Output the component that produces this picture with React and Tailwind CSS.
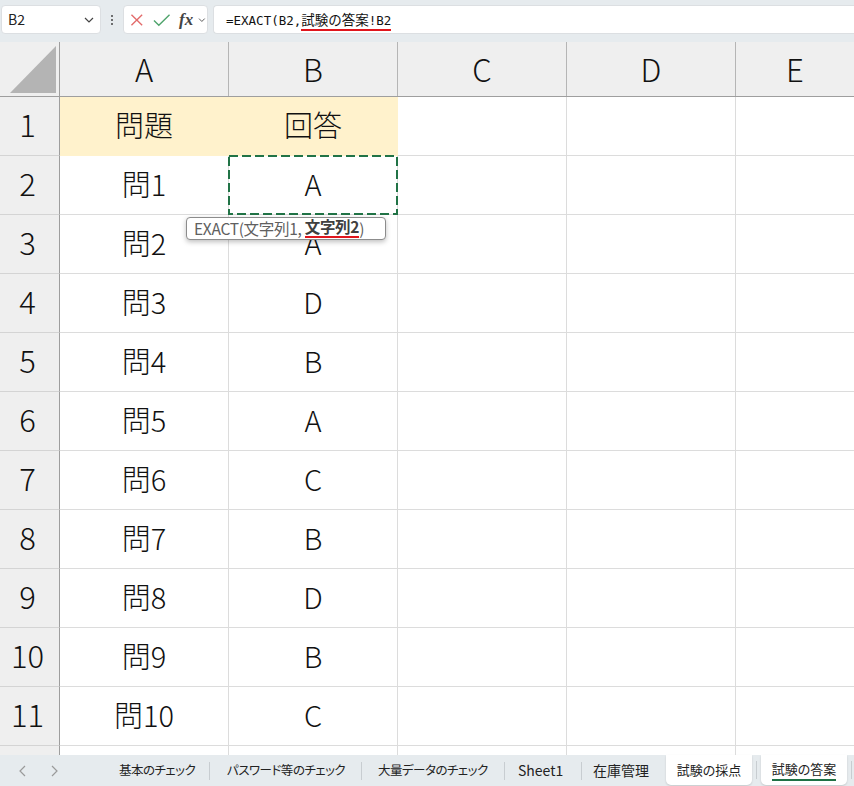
import React from "react";

const F = { fontFamily: '"Noto Sans CJK JP", "Noto Sans", sans-serif' };

const rows = [
  ["問題", "回答"],
  ["問1", "A"],
  ["問2", "A"],
  ["問3", "D"],
  ["問4", "B"],
  ["問5", "A"],
  ["問6", "C"],
  ["問7", "B"],
  ["問8", "D"],
  ["問9", "B"],
  ["問10", "C"],
];

function Chevron({ className }) {
  return (
    <svg className={className} width="10" height="6" viewBox="0 0 10 6" fill="none">
      <path d="M1 1l4 4 4-4" stroke="#444" strokeWidth="1.2" />
    </svg>
  );
}

function Sep() {
  return <span className="w-px h-[18px] bg-[#c8cdd1] shrink-0"></span>;
}

export default function App() {
  return (
    <div className="w-[854px] h-[786px] overflow-hidden flex flex-col bg-white text-[#1a1a1a]" style={F}>
      {/* Formula bar */}
      <div className="h-[42px] bg-[#e6ebee] flex items-start pt-[5px] pl-[1px] gap-0 shrink-0">
        <div className="w-[100px] h-[29px] bg-white rounded-[4px] border border-[#dcdfe2] flex items-center pl-[6px] pr-[6px] justify-between">
          <span className="text-[14px] text-[#222]">B2</span>
          <Chevron />
        </div>
        <div className="w-[22px] h-[29px] flex flex-col items-center justify-center gap-[2px]">
          <span className="w-[2px] h-[2px] bg-[#444] rounded-full"></span>
          <span className="w-[2px] h-[2px] bg-[#444] rounded-full"></span>
          <span className="w-[2px] h-[2px] bg-[#444] rounded-full"></span>
        </div>
        <div className="w-[85px] h-[29px] bg-white rounded-[4px] border border-[#dcdfe2] flex items-center pl-[5px]">
          <svg width="14" height="14" viewBox="0 0 14 14" className="ml-[1px]">
            <path d="M1.5 1.5l11 11M12.5 1.5l-11 11" stroke="#e36b6b" strokeWidth="1.4" />
          </svg>
          <svg width="18" height="14" viewBox="0 0 18 14" className="ml-[9px]">
            <path d="M1 7.5l5 5L17 1.5" stroke="#4ea36b" strokeWidth="1.4" fill="none" />
          </svg>
          <span className="ml-[9px] text-[17px] italic font-semibold text-[#444] leading-none" style={{ fontFamily: '"Liberation Serif", "DejaVu Serif", serif' }}>fx</span>
          <Chevron className="ml-[4px] scale-75" />
        </div>
        <div className="ml-[5px] flex-1 h-[29px] bg-white rounded-l-[4px] border border-r-0 border-[#dcdfe2] flex items-center pl-[12px]">
          <span className="text-[12.5px] text-[#111] whitespace-nowrap" style={{ fontFamily: '"DejaVu Sans Mono", "Noto Sans CJK JP", monospace' }}>
            =EXACT(B2,<span className="border-b-2 border-[#e0151c] pb-[1px]"><span className="text-[13.5px]" style={F}>試験の答案</span>!B2</span>
          </span>
        </div>
      </div>

      {/* Grid */}
      <div className="relative flex-1 flex flex-col overflow-hidden font-light">
        {/* Column headers */}
        <div className="flex h-[55px] bg-[#efefef] border-b border-[#9e9e9e] shrink-0">
          <div className="w-[60px] border-r border-[#9e9e9e] relative shrink-0">
            <svg className="absolute left-[10px] top-[4px]" width="46" height="47" viewBox="0 0 46 47">
              <polygon points="46,0 46,47 0,47" fill="#b4b4b4" />
            </svg>
          </div>
          {["A", "B", "C", "D", "E"].map((c, i) => (
            <div
              key={c}
              className={`${i < 4 ? "w-[169px] border-r border-[#b5b5b5]" : "flex-1"} shrink-0 flex items-center justify-center text-[31px] text-[#111]`}
            >
              {c}
            </div>
          ))}
        </div>

        {rows.map((r, i) => {
          const yellow = i === 0;
          return (
            <div key={i} className="flex h-[59px] shrink-0">
              <div className="w-[60px] shrink-0 bg-[#efefef] border-r border-[#9e9e9e] border-b border-b-[#d4d4d4] flex items-center justify-center text-[31px] pb-[3px] pr-[4px] text-[#111]">
                {i + 1}
              </div>
              <div className={`w-[169px] shrink-0 flex items-center justify-center text-[29px] pb-[3px] border-r border-b text-[#111] ${yellow ? "bg-[#fff2cc] border-[#fff2cc]" : "border-[#dcdcdc]"}`}>
                {r[0]}
              </div>
              <div className={`w-[169px] shrink-0 flex items-center justify-center text-[29px] pb-[3px] border-r border-b text-[#111] ${yellow ? "bg-[#fff2cc] border-[#fff2cc]" : "border-[#dcdcdc]"}`}>
                {r[1]}
              </div>
              <div className="w-[169px] shrink-0 border-r border-b border-[#dcdcdc]"></div>
              <div className="w-[169px] shrink-0 border-r border-b border-[#dcdcdc]"></div>
              <div className="flex-1 border-b border-[#dcdcdc]"></div>
            </div>
          );
        })}
        <div className="flex flex-1">
          <div className="w-[60px] shrink-0 bg-[#efefef] border-r border-[#9e9e9e]"></div>
          <div className="w-[169px] shrink-0 border-r border-[#dcdcdc]"></div>
          <div className="w-[169px] shrink-0 border-r border-[#dcdcdc]"></div>
          <div className="w-[169px] shrink-0 border-r border-[#dcdcdc]"></div>
          <div className="w-[169px] shrink-0 border-r border-[#dcdcdc]"></div>
          <div className="flex-1"></div>
        </div>

        {/* Selection (copy) marquee on B2 */}
        <svg className="absolute left-[228px] top-[113px]" width="170" height="60" viewBox="0 0 170 60">
          <rect x="1" y="1" width="168" height="58" fill="none" stroke="#217346" strokeWidth="2" strokeDasharray="9 4" />
        </svg>

        {/* Function tooltip */}
        <div className="absolute left-[186px] top-[175px] h-[23px] w-[200px] pl-[7px] bg-white border border-[#8c8c8c] rounded-[4px] shadow-[0_2px_5px_rgba(0,0,0,0.25)] flex items-center text-[15.5px] font-normal text-[#606060] whitespace-nowrap leading-none tracking-[-0.3px]">
          EXACT(文字列1,&nbsp;
          <span className="font-bold text-[#404040] border-b-2 border-[#e0151c] pb-[1px]">文字列2</span>)
        </div>
      </div>

      {/* Sheet tabs */}
      <div className="h-[31px] bg-[#e6ebee] flex items-stretch text-[13px] text-[#222] shrink-0 whitespace-nowrap [font-feature-settings:'palt']">
        <div className="w-[110px] shrink-0 flex items-center pl-[18px] gap-[21px]">
          <svg width="10" height="12" viewBox="0 0 10 12"><path d="M7 1L2 6l5 5" stroke="#9a9a9a" strokeWidth="1.2" fill="none" /></svg>
          <svg width="10" height="12" viewBox="0 0 10 12"><path d="M3 1l5 5-5 5" stroke="#9a9a9a" strokeWidth="1.2" fill="none" /></svg>
        </div>
        <div className="flex items-center shrink-0">
          <span className="w-[99px] pl-[9px] shrink-0 text-[12.5px] tracking-[-0.5px]">基本のチェック</span>
          <Sep />
          <span className="w-[151px] pl-[17px] shrink-0 text-[12.5px] tracking-[-0.5px]">パスワード等のチェック</span>
          <Sep />
          <span className="w-[142px] pl-[16px] shrink-0 text-[12.5px] tracking-[-0.5px]">大量データのチェック</span>
          <Sep />
          <span className="w-[76px] pl-[13px] shrink-0 text-[14px]">Sheet1</span>
          <Sep />
          <span className="w-[84px] pl-[11px] shrink-0 text-[14px]">在庫管理</span>
        </div>
        <div className="flex items-start shrink-0">
          <div className="h-[30px] w-[86px] bg-white rounded-b-[5px] flex items-center justify-center shadow-[0_1px_2px_rgba(0,0,0,0.15)]">試験の採点</div>
          <span className="w-px h-[18px] bg-[#c8cdd1] mx-[4px] mt-[6px]"></span>
          <div className="h-[30px] w-[86px] bg-white rounded-b-[5px] flex flex-col items-center justify-center shadow-[0_1px_2px_rgba(0,0,0,0.15)]">
            <span className="border-b-2 border-[#1e7145] leading-[20px]">試験の答案</span>
          </div>
          <span className="w-px h-[18px] bg-[#c8cdd1] mx-[4px] mt-[6px]"></span>
        </div>
      </div>
    </div>
  );
}
